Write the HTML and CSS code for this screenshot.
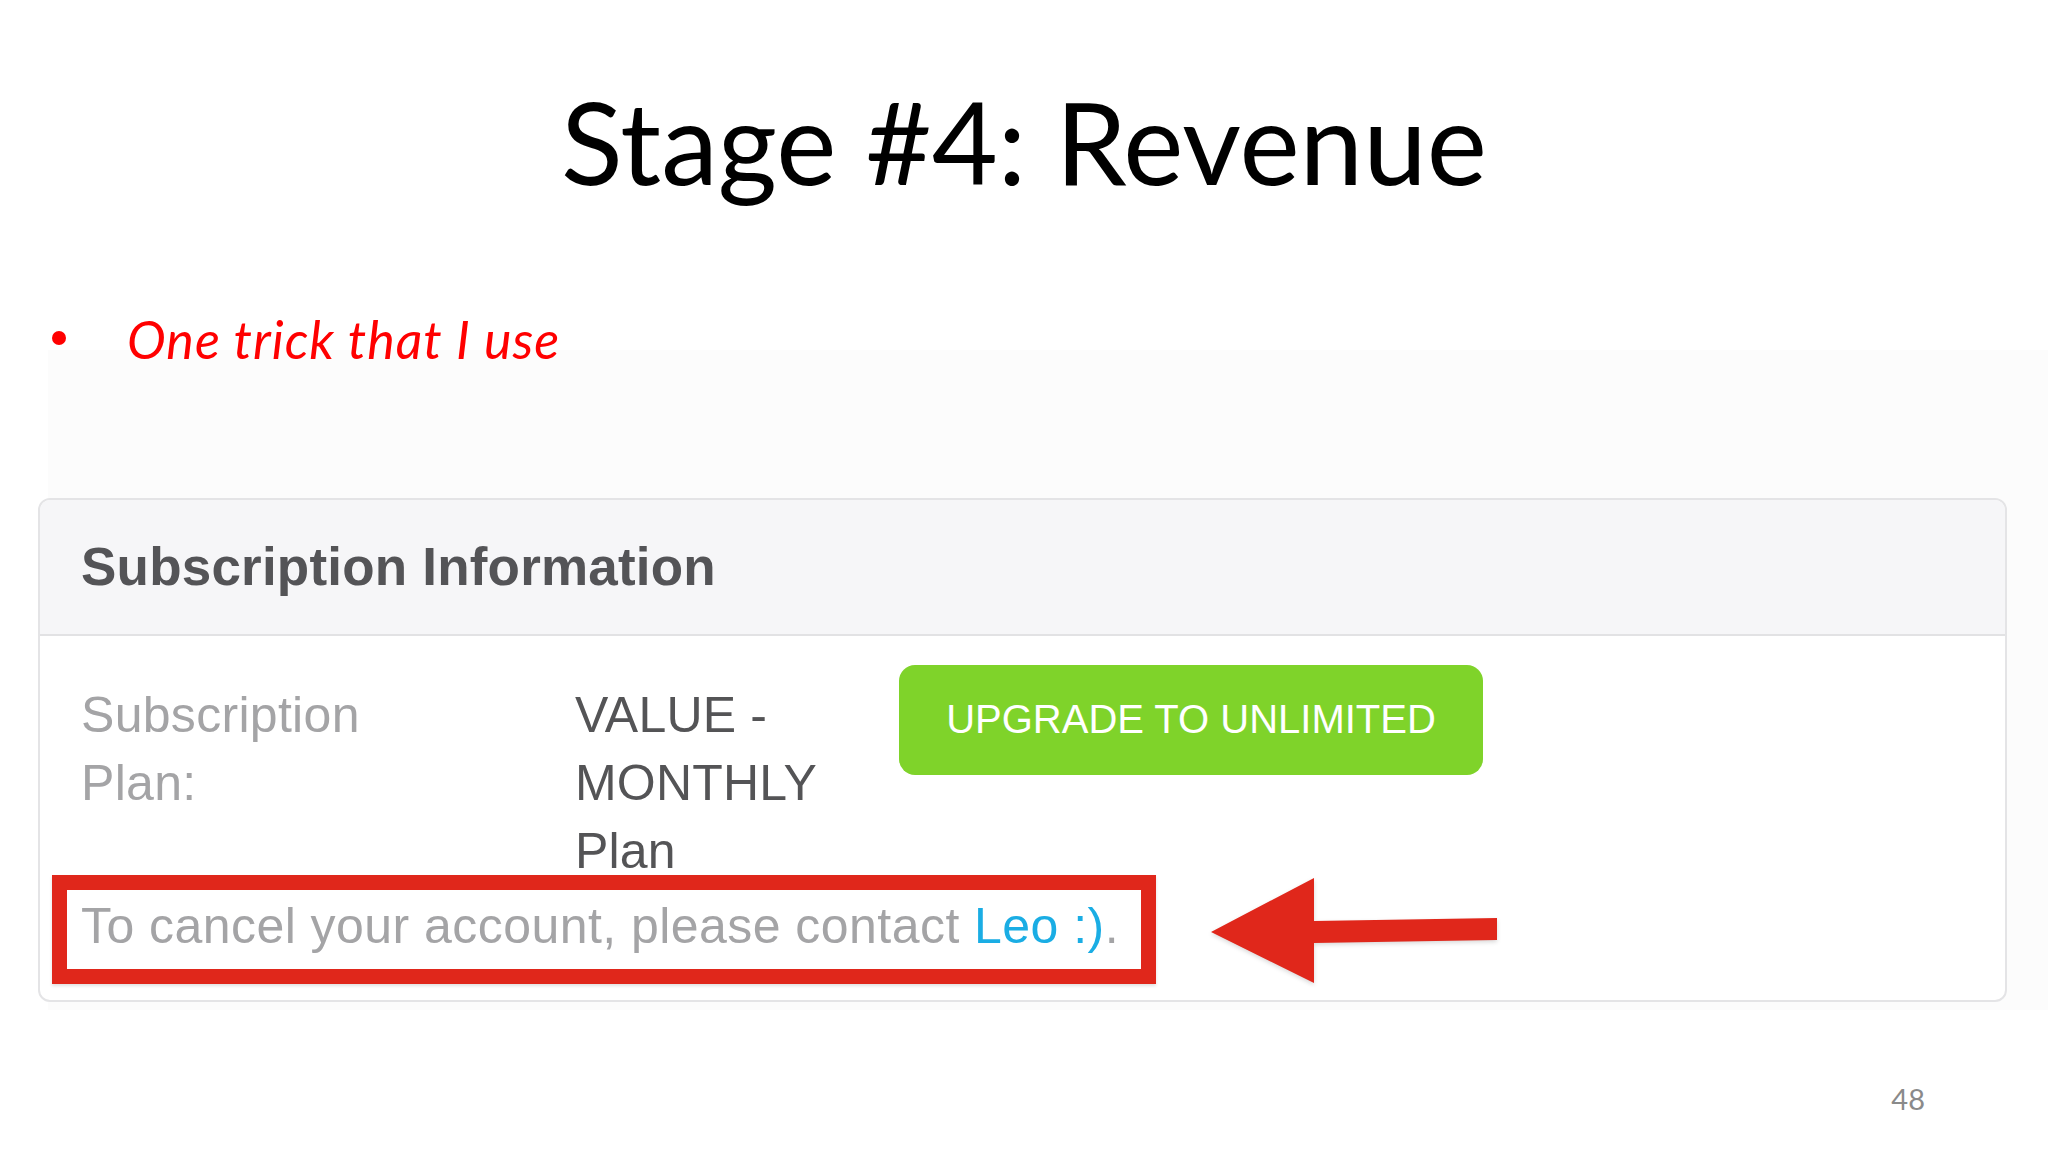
FILE: index.html
```html
<!DOCTYPE html>
<html lang="en">
<head>
<meta charset="utf-8">
<title>Stage #4: Revenue</title>
<link rel="stylesheet" href="styles.css">
</head>
<body>
<div class="slide">
  <h1 class="title">Stage #4: Revenue</h1>
  <ul class="bullets">
    <li>One trick that I use</li>
  </ul>
  <section class="shot">
    <div class="card">
      <div class="card-head">
        <h2>Subscription Information</h2>
      </div>
      <div class="card-body">
        <div class="plan-row">
          <div class="plan-label">Subscription Plan:</div>
          <div class="plan-value">VALUE - MONTHLY Plan</div>
          <a class="upgrade-btn">UPGRADE TO UNLIMITED</a>
        </div>
        <p class="cancel">To cancel your account, please contact <span class="leo">Leo :)</span>.</p>
      </div>
      <div class="callout-box"></div>
      <svg class="callout-arrow" width="310" height="125" viewBox="0 0 310 125" aria-hidden="true">
        <polygon points="11,62 114,8 114,51 297,48 297,70 114,73 114,113" />
      </svg>
    </div>
  </section>
  <div class="page-num">48</div>
</div>
</body>
</html>
```
FILE: styles.css
```css
* {
  box-sizing: border-box;
}

html, body {
  margin: 0;
  padding: 0;
  background: #ffffff;
}

.slide {
  width: 2048px;
  height: 1152px;
  overflow: hidden;
  padding-top: 84px;
  background: #ffffff;
}

.title {
  margin: 0;
  font-family: "Lato", "Open Sans", sans-serif;
  font-weight: 400;
  font-size: 114px;
  line-height: 1;
  text-align: center;
  color: #000000;
}

.bullets {
  list-style: none;
  margin: 115px 0 0 0;
  padding: 0 0 0 127px;
  font-family: "Lato", "Open Sans", sans-serif;
  font-style: italic;
  font-size: 52px;
  letter-spacing: 1px;
  line-height: 1;
  height: 37px;
  color: #ff0000;
}

.bullets li {
  position: relative;
}

.bullets li::before {
  content: "";
  position: absolute;
  left: -75px;
  top: 18px;
  width: 14px;
  height: 14px;
  border-radius: 50%;
  background: #ff0000;
}

.shot {
  margin-left: 48px;
  padding: 148px 0 8px 0;
  background: #fcfcfc;
}

.card {
  position: relative;
  margin-left: -10px;
  width: 1969px;
  border: 2px solid #e4e4e6;
  border-radius: 12px;
  background: #ffffff;
  overflow: hidden;
  font-family: "Liberation Sans", Arial, Helvetica, sans-serif;
}

.card-head {
  background: #f6f6f8;
  padding: 35px 41px 35px 41px;
  border-bottom: 2px solid #e2e2e4;
}

.card-head h2 {
  margin: 0;
  font-size: 53px;
  line-height: 63.6px;
  font-weight: 700;
  letter-spacing: 0.2px;
  color: #545457;
}

.card-body {
  padding: 29px 41px 40px 41px;
}

.plan-row {
  display: flex;
  align-items: flex-start;
}

.plan-label {
  flex: 0 0 494px;
  padding-right: 150px;
  margin-top: 16px;
  font-size: 50px;
  line-height: 68px;
  letter-spacing: 0.3px;
  color: #a4a4a6;
}

.plan-value {
  flex: 0 0 300px;
  margin-top: 16px;
  font-size: 50px;
  line-height: 68px;
  letter-spacing: 0.2px;
  color: #545456;
}

.upgrade-btn {
  margin-left: 24px;
  width: 584px;
  height: 110px;
  border-radius: 16px;
  background: #7fd32a;
  color: #ffffff;
  font-size: 40px;
  display: flex;
  align-items: center;
  justify-content: center;
  text-decoration: none;
}

.cancel {
  margin: 7px 0 0 0;
  font-size: 50px;
  line-height: 68px;
  letter-spacing: 0.45px;
  color: #a4a4a6;
}

.leo {
  color: #1aade4;
}

.callout-box {
  position: absolute;
  left: 12px;
  top: 375px;
  width: 1104px;
  height: 109px;
  border: 15px solid #e0271b;
  box-shadow: 0 2px 3px rgba(0, 0, 0, 0.12);
}

.callout-arrow {
  position: absolute;
  left: 1160px;
  top: 370px;
  filter: drop-shadow(0 2px 2px rgba(0, 0, 0, 0.15));
}

.callout-arrow polygon {
  fill: #e0271b;
}

.page-num {
  margin-top: 74px;
  padding-right: 123px;
  text-align: right;
  font-family: "Lato", "Open Sans", sans-serif;
  font-size: 29px;
  line-height: 1;
  color: #8a8a8a;
}
```
